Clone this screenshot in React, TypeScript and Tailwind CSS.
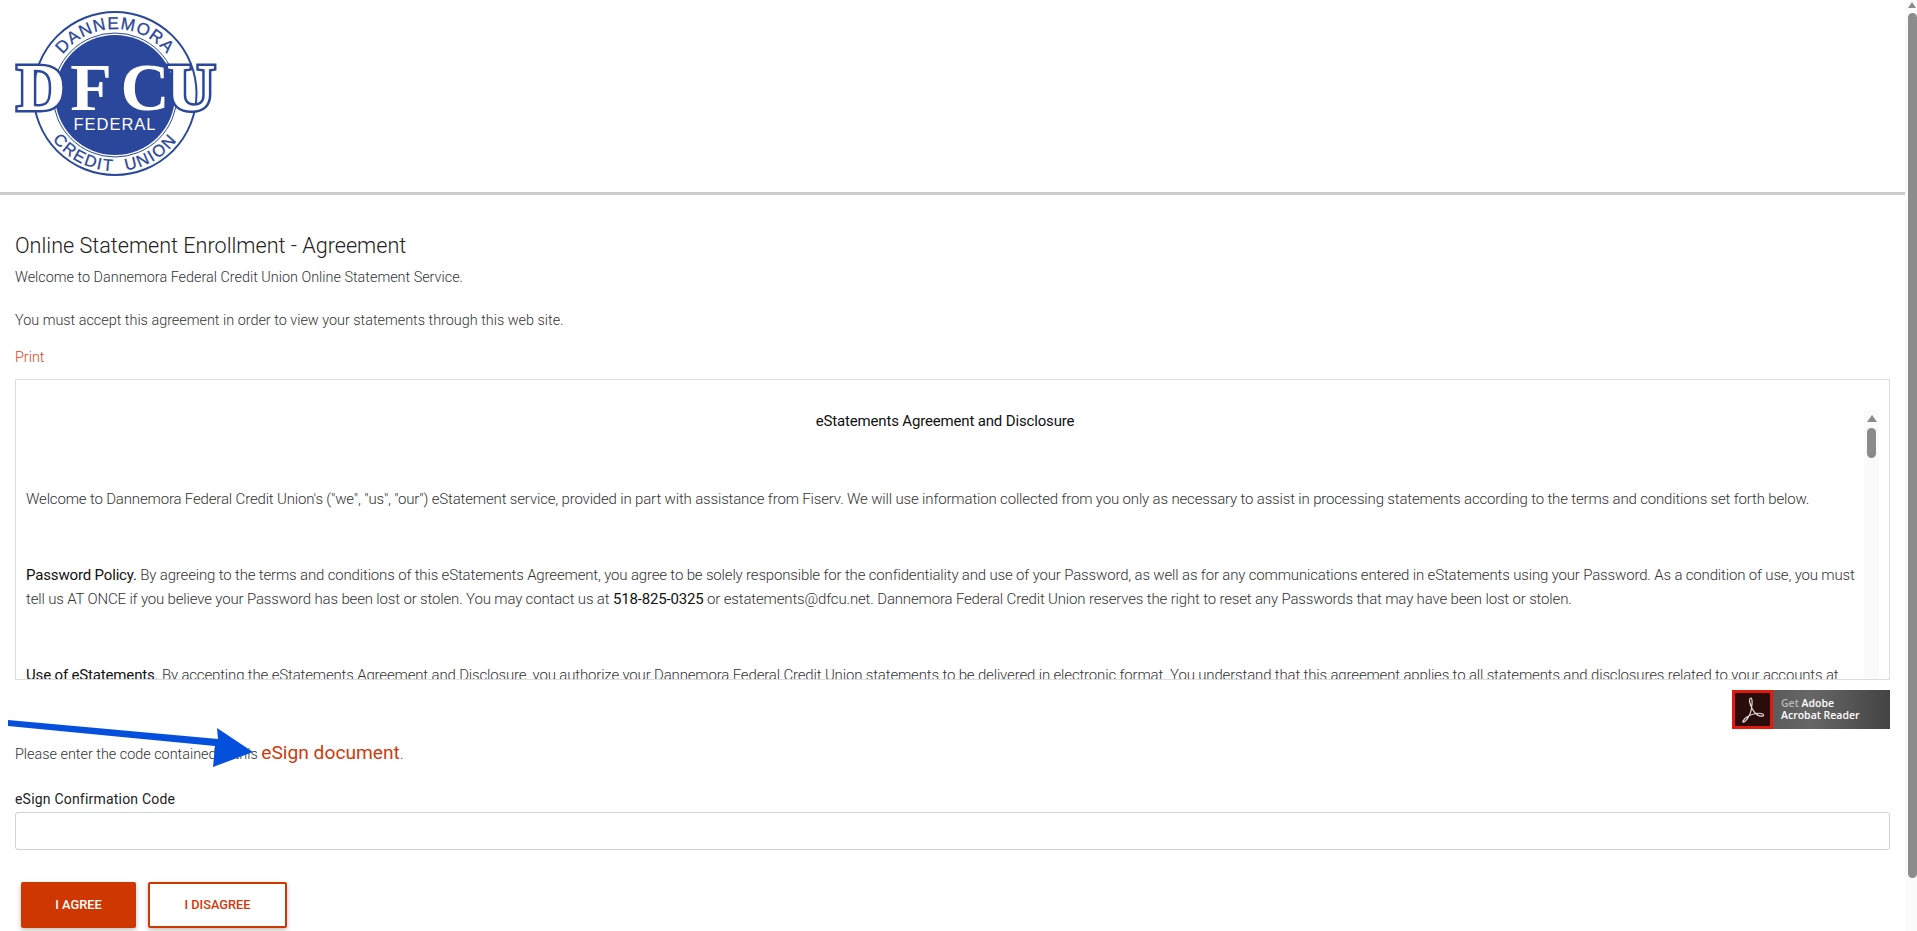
const bodyFont = "font-['Roboto',sans-serif]";

function Logo() {
  return (
    <svg width="260" height="190" viewBox="0 0 260 190" className="block">
      <defs>
        <path id="arcTop" d="M 49 95 A 66 66 0 0 1 181 95" />
        <path id="arcBottom" d="M 37 93 A 78 78 0 0 0 193 93" />
      </defs>
      <circle cx="115" cy="93.5" r="81.5" fill="#fff" stroke="#2a479b" strokeWidth="2" />
      <circle cx="115" cy="95" r="62" fill="#fff" stroke="#2a479b" strokeWidth="1" />
      <circle cx="115" cy="95" r="60" fill="#2a479b" />
      <text fontFamily="Liberation Sans" fontSize="17" fill="#2a479b" stroke="#2a479b" strokeWidth="0.3" letterSpacing="1.1">
        <textPath href="#arcTop" startOffset="50%" textAnchor="middle">DANNEMORA</textPath>
      </text>
      <text fontFamily="Liberation Sans" fontSize="16.5" fill="#2a479b" stroke="#2a479b" strokeWidth="0.3" letterSpacing="1.6">
        <textPath href="#arcBottom" startOffset="50%" textAnchor="middle">{"CREDIT\u00a0\u00a0UNION"}</textPath>
      </text>
      <g fontFamily="Liberation Serif" fontWeight="700" fontSize="68" fill="#fff" textAnchor="middle">
        <text x="41" y="110" stroke="#2a479b" strokeWidth="5" paintOrder="stroke">D</text>
        <text x="91" y="110">F</text>
        <text x="145" y="110">C</text>
        <text x="191" y="110" stroke="#2a479b" strokeWidth="5" paintOrder="stroke">U</text>
      </g>
      <text x="115" y="130" textAnchor="middle" fontFamily="Liberation Sans" fontSize="16.5" letterSpacing="1" fill="#fff">FEDERAL</text>
    </svg>
  );
}

function AcrobatBadge() {
  return (
    <div className="flex h-[39px] w-[158px] bg-gradient-to-r from-[#505050] via-[#666666] to-[#444444]">
      <div className="flex h-[39px] w-[41px] shrink-0 items-center justify-center border-[3px] border-[#e01a0c] bg-[#2a0c0a]">
        <svg width="26" height="28" viewBox="0 0 26 28" fill="none" stroke="#e4dcdc" strokeWidth="1.2">
          <path d="M11 2 C8 3 10 9 13 14 C15 18 19 21 23 20 C25 19 22 16.5 16 17.5 C10 18.5 4 22 3 25 C2 28 7 25 10 18 C12 13 13 3 11 2 Z" />
        </svg>
      </div>
      <div className="pl-2 pt-[7px] font-['Open_Sans',sans-serif] text-[10.5px] leading-[12px] font-semibold whitespace-nowrap text-white">
        <div><span className="text-[#b9b9b9]">Get</span> Adobe</div>
        <div>Acrobat Reader</div>
      </div>
    </div>
  );
}

export default function App() {
  return (
    <div className={`relative flex h-screen overflow-hidden bg-white ${bodyFont}`}>
      <div className="min-w-0 flex-1">
        <div className="h-[195px] border-b-[3px] border-[#cccccc]">
          <Logo />
        </div>
        <div className="px-[15px]">
          <h1 className="mt-[37px] text-[21.6px] leading-[28px] font-light text-[#222222]">Online Statement Enrollment - Agreement</h1>
          <p className="mt-[7px] text-[14.4px] leading-[21px] font-light text-[#333333]">Welcome to Dannemora Federal Credit Union Online Statement Service.</p>
          <p className="mt-[22px] text-[14.4px] leading-[21px] font-light text-[#333333]">You must accept this agreement in order to view your statements through this web site.</p>
          <a className="mt-[16px] block text-[14.4px] leading-[21px] font-light text-[#d9481c]">Print</a>

          <div className="mt-[11px] flex h-[301px] overflow-hidden border border-[#dddddd] pr-[10px] text-[15px] leading-[24px] font-light tracking-[-0.16px] text-[#333333]">
            <div className="min-w-0 flex-1 overflow-hidden pl-[10px]">
              <p className="mt-[29px] text-center font-normal text-[#111111]">eStatements Agreement and Disclosure</p>
              <p className="mt-[54px] whitespace-nowrap">Welcome to Dannemora Federal Credit Union's ("we", "us", "our") eStatement service, provided in part with assistance from Fiserv. We will use information collected from you only as necessary to assist in processing statements according to the terms and conditions set forth below.</p>
              <p className="mt-[52px]"><span className="font-normal text-[#111111]">Password Policy.</span> By agreeing to the terms and conditions of this eStatements Agreement, you agree to be solely responsible for the confidentiality and use of your Password, as well as for any communications entered in eStatements using your Password. As a condition of use, you must tell us AT ONCE if you believe your Password has been lost or stolen. You may contact us at <span className="font-normal text-[#111111]">518-825-0325</span> or estatements@dfcu.net. Dannemora Federal Credit Union reserves the right to reset any Passwords that may have been lost or stolen.</p>
              <p className="mt-[52px]"><span className="font-normal text-[#111111]">Use of eStatements.</span> By accepting the eStatements Agreement and Disclosure, you authorize your Dannemora Federal Credit Union statements to be delivered in electronic format. You understand that this agreement applies to all statements and disclosures related to your accounts at</p>
            </div>
            <div className="mt-[30px] flex w-[15px] shrink-0 flex-col items-center bg-[#fafafa] pt-[35px]">
              <div className="-mt-[30px] h-0 w-0 border-x-[5px] border-b-[7px] border-x-transparent border-b-[#8a8a8a]" />
              <div className="mt-[6px] h-[30px] w-[9px] rounded-full bg-[#8a8a8a]" />
            </div>
          </div>

          <div className="mt-[10px] flex justify-end">
            <AcrobatBadge />
          </div>

          <p className="mt-[13px] text-[14.4px] leading-[21px] font-light text-[#333333]">
            Please enter the code contained in this <a className="text-[19.2px] font-normal text-[#d1390c]">eSign document</a>.
          </p>

          <label className="mt-[24px] block text-[14px] leading-[21px] tracking-[0.2px] text-[#222222]">eSign Confirmation Code</label>
          <input className="mt-[2px] block h-[38px] w-full rounded-[3px] border border-[#ced4da] bg-white" />

          <div className="mt-[32px] flex gap-3 pl-[6px]">
            <button className="h-[46px] w-[115px] rounded-[2px] bg-[#cf3700] text-[12.8px] font-medium text-white shadow-[0_2px_5px_rgba(0,0,0,0.26)]">I AGREE</button>
            <button className="h-[46px] w-[139px] rounded-[2px] border-2 border-[#cf3700] bg-white text-[12.8px] font-medium text-[#d1390c] shadow-[0_2px_5px_rgba(0,0,0,0.26)]">I DISAGREE</button>
          </div>
        </div>
      </div>

      <div className="flex w-[12px] shrink-0 flex-col bg-[#fbfbfb] pt-[2px] pl-[3px]">
        <div className="h-0 w-0 border-x-[4.5px] border-b-[6px] border-x-transparent border-b-[#8c8c8c]" />
        <div className="mt-[5px] h-[865px] w-[9px] rounded-full bg-[#8c8c8c]" />
      </div>

      {/* pointer drawn over the page */}
      <svg className="absolute top-[715px] left-0" width="260" height="60" viewBox="0 0 260 60">
        <path d="M8 5 L218 24 L217 13 L253 37 L213 52 L215 31 L8 11 Z" fill="#0450dc" />
      </svg>
    </div>
  );
}
